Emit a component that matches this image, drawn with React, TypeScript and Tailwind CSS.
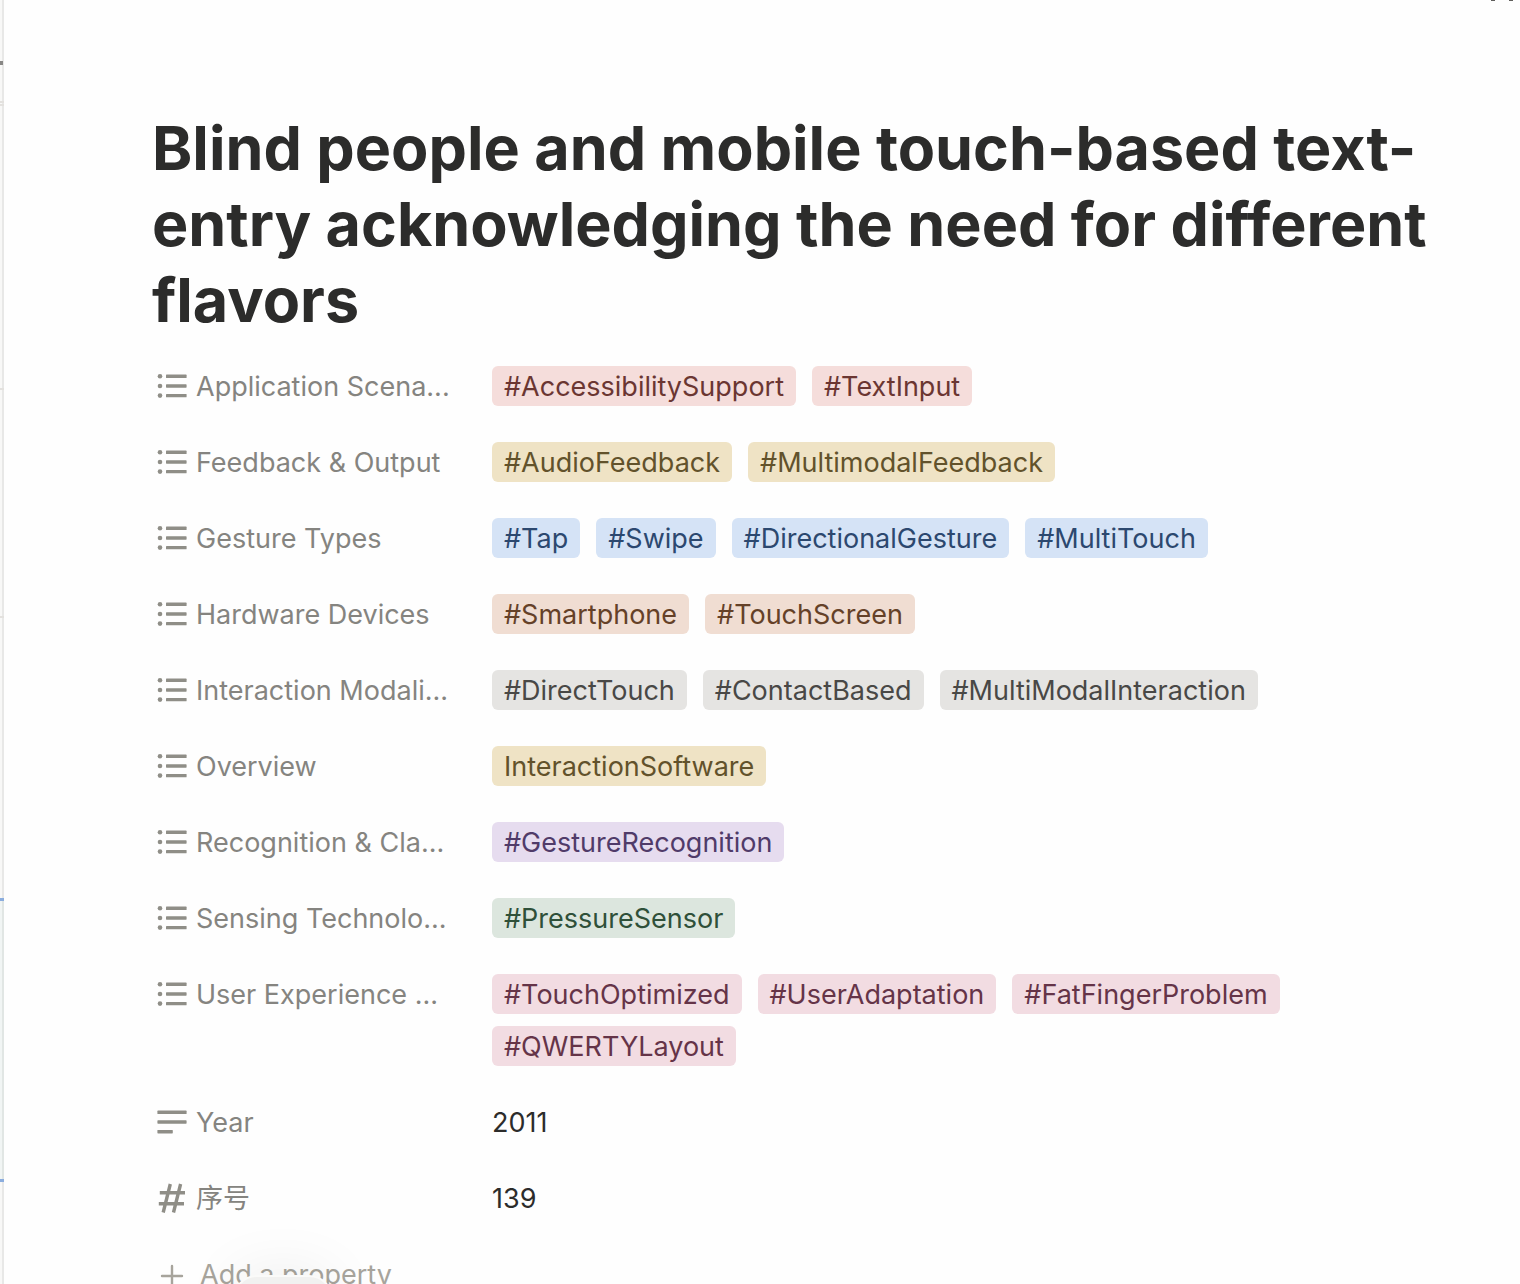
import React from "react";

type Tone = "red" | "yellow" | "blue" | "orange" | "gray" | "purple" | "green" | "pink";

const tones: Record<Tone, string> = {
  red: "bg-[#f5dddb] text-[#6b3632]",
  yellow: "bg-[#efe3c5] text-[#62522b]",
  blue: "bg-[#d5e3f6] text-[#2c486f]",
  orange: "bg-[#f0ddd2] text-[#654128]",
  gray: "bg-[#e5e4e2] text-[#494846]",
  purple: "bg-[#e6dcef] text-[#503b69]",
  green: "bg-[#dce6de] text-[#2f5039]",
  pink: "bg-[#f2dce2] text-[#653448]",
};

const tagRows: { label: string; tone: Tone; tags: string[] }[] = [
  { label: "Application Scena...", tone: "red", tags: ["#AccessibilitySupport", "#TextInput"] },
  { label: "Feedback & Output", tone: "yellow", tags: ["#AudioFeedback", "#MultimodalFeedback"] },
  { label: "Gesture Types", tone: "blue", tags: ["#Tap", "#Swipe", "#DirectionalGesture", "#MultiTouch"] },
  { label: "Hardware Devices", tone: "orange", tags: ["#Smartphone", "#TouchScreen"] },
  { label: "Interaction Modali...", tone: "gray", tags: ["#DirectTouch", "#ContactBased", "#MultiModalInteraction"] },
  { label: "Overview", tone: "yellow", tags: ["InteractionSoftware"] },
  { label: "Recognition & Cla...", tone: "purple", tags: ["#GestureRecognition"] },
  { label: "Sensing Technolo...", tone: "green", tags: ["#PressureSensor"] },
  { label: "User Experience ...", tone: "pink", tags: ["#TouchOptimized", "#UserAdaptation", "#FatFingerProblem", "#QWERTYLayout"] },
];

function ListIcon() {
  return (
    <svg className="h-8 w-8 shrink-0" viewBox="0 0 32 32" fill="currentColor" aria-hidden="true">
      {[6.3, 16, 25.6].map((y) => (
        <g key={y}>
          <circle cx="4" cy={y} r="2.3" />
          <rect x="10" y={y - 1.7} width="20.6" height="3.4" rx="0.6" />
        </g>
      ))}
    </svg>
  );
}

function TextIcon() {
  return (
    <svg className="h-8 w-8 shrink-0" viewBox="0 0 32 32" fill="currentColor" aria-hidden="true">
      <rect x="1.4" y="4.6" width="29.2" height="3.4" rx="0.6" />
      <rect x="1.4" y="14.3" width="29.2" height="3.4" rx="0.6" />
      <rect x="1.4" y="24" width="15.4" height="3.4" rx="0.6" />
    </svg>
  );
}

function NumberIcon() {
  return (
    <svg className="h-8 w-8 shrink-0" viewBox="0 0 32 32" fill="none" stroke="currentColor" strokeWidth="3.4" aria-hidden="true">
      <path d="M3.8 10.7H29M2.8 21.7H28M14.3 2 7.2 30.5M24.6 2 17.5 30.5" />
    </svg>
  );
}

function Property({ icon, label, children }: { icon: React.ReactNode; label: string; children: React.ReactNode }) {
  return (
    <div className="flex items-start">
      <dt className="flex h-10 w-84 shrink-0 gap-2 whitespace-nowrap text-[#858480]">
        <span className="flex items-center text-[#8f8e87]">{icon}</span>
        {label}
      </dt>
      <dd className="flex min-h-10 min-w-0 flex-1 flex-wrap gap-x-4 gap-y-3">{children}</dd>
    </div>
  );
}

function PageEdge() {
  return (
    <div className="flex w-1 shrink-0 flex-col border-r-2 border-[#e8e8e7] bg-[#f8f8f7]" aria-hidden="true">
      <div className="mt-[61px] h-1 w-[3px] bg-[#888785]" />
      <div className="mt-9 h-[2px] w-1 bg-[#e3e1de]" />
      <div className="mt-px h-[2px] w-1 bg-[#e3e1de]" />
      <div className="mt-[282px] h-[2px] w-1 bg-[#e3e1de]" />
      <div className="mt-[226px] h-[2px] w-1 bg-[#e3e1de]" />
      <div className="mt-[280px] h-[3px] w-1 bg-[#8badde]" />
      <div className="h-[278px] w-1 border-r-2 border-[#e1e6e4] bg-[#f1f5f4]" />
      <div className="h-[3px] w-1 bg-[#8badde]" />
    </div>
  );
}

export default function App() {
  return (
    <div className="relative flex h-screen overflow-hidden bg-[#fefefe] font-['Inter','Noto_Sans_CJK_SC',sans-serif] text-[27px] leading-[42px] text-[#2c2c2b]">
      <PageEdge />
      <main className="min-w-0 flex-1 pr-20 pl-[148px]">
        <button type="button" aria-label="Close" className="absolute top-0 right-1.5 block">
          <svg className="h-px w-6" viewBox="0 0 24 1" fill="#5f5e5b" aria-hidden="true">
            <path d="M1 0h4v1H1zM19 0h4v1h-4z" />
          </svg>
        </button>
        <h1 className="mt-[110px] text-[61px] leading-[76px] font-bold">
          Blind people and mobile touch-based text-entry acknowledging the need for different flavors
        </h1>
        <dl className="mt-7 flex flex-col gap-9 pl-1">
          {tagRows.map((row) => (
            <Property key={row.label} icon={<ListIcon />} label={row.label}>
              {row.tags.map((tag) => (
                <span key={tag} className={`h-10 rounded-md px-3 ${tones[row.tone]}`}>
                  {tag}
                </span>
              ))}
            </Property>
          ))}
          <Property icon={<TextIcon />} label="Year">
            <span className="h-10">2011</span>
          </Property>
          <Property icon={<NumberIcon />} label="序号">
            <span className="h-10">139</span>
          </Property>
        </dl>
        <button type="button" className="mt-9 flex h-10 gap-3 pl-1 text-[#a7a49c]">
          <svg className="mt-1 h-8 w-8" viewBox="0 0 32 32" fill="none" stroke="currentColor" strokeWidth="2.4" strokeLinecap="round" aria-hidden="true">
            <path d="M6 18h20M16 8v20" />
          </svg>
          Add a property
        </button>
      </main>
      <div
        className="absolute -bottom-10 left-[233px] h-[49px] w-25 rounded-3xl border-2 border-[#fafaf9] bg-[#f1f1f0] shadow-[0_0_60px_rgba(0,0,0,0.08)]"
        aria-hidden="true"
      />
    </div>
  );
}
